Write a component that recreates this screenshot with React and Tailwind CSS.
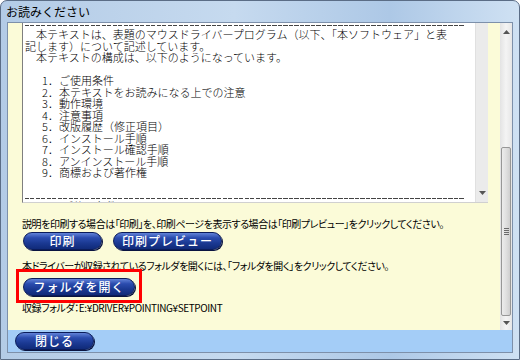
const FONT = "font-['Noto_Sans_CJK_JP',sans-serif]"

const INTRO = [
  '　本テキストは、表題のマウスドライバープログラム（以下、「本ソフトウェア」と表',
  '記します）について記述しています。',
  '　本テキストの構成は、以下のようになっています。',
  '',
]

const ITEMS = [
  '1．ご使用条件',
  '2．本テキストをお読みになる上での注意',
  '3．動作環境',
  '4．注意事項',
  '5．改版履歴（修正項目）',
  '6．インストール手順',
  '7．インストール確認手順',
  '8．アンインストール手順',
  '9．商標および著作権',
]

function Arrow({ up }) {
  return (
    <svg width="7" height="4" viewBox="0 0 7 4">
      <path d={up ? 'M0 4 L3.5 0 L7 4 Z' : 'M0 0 L3.5 4 L7 0 Z'} fill="#555" />
    </svg>
  )
}

function NavyButton({ children, className }) {
  return (
    <button className={`h-[18px] rounded-full border border-[#0b1c5a] bg-[linear-gradient(180deg,#6283d8_0%,#2b4cae_30%,#1a3891_65%,#102a79_100%)] text-white text-[12px] font-medium tracking-[1px] leading-none shadow-[1px_1px_0_#0a1440] ${className}`}>
      {children}
    </button>
  )
}

export default function App() {
  return (
    <div className={`w-[520px] h-[360px] flex flex-col rounded-t-[7px] border border-[#5b6d86] bg-[linear-gradient(90deg,#b3cbe6,#c6daef_45%,#adc8e6_75%,#cfe1f3)] overflow-hidden ${FONT}`}>
      <div className="h-[21px] flex items-center pl-[5px] text-[12px] text-black">お読みください</div>

      <div className="flex-1 flex px-[6px] pb-[6px]">
        <div className="flex-1 flex flex-col border border-[#7d90aa] bg-white">
          <div className="flex-1 flex">
            {/* cream page */}
            <div className="flex-1 flex flex-col bg-[#fbfbd8] pl-[14px] pr-[12px]">
              {/* text box */}
              <div className="h-[180px] flex border-l border-b border-l-[#7f7f7f] border-b-[#d0d0d0] bg-white">
                <div className="flex-1 overflow-hidden pl-[2px] pt-[2px] text-[11px] leading-[11.5px] font-light text-black">
                  <div className="w-[440px] h-px bg-[repeating-linear-gradient(90deg,#444_0_4px,transparent_4px_5.5px)]" />
                  <div className="mt-[3px]">
                    {INTRO.map((l, i) => (
                      <div key={i} className="h-[11.5px] whitespace-pre">{l}</div>
                    ))}
                    {ITEMS.map(l => (
                      <div key={l} className="h-[11.5px] pl-[17px] whitespace-pre">{l}</div>
                    ))}
                  </div>
                  <div className="mt-[19px] w-[440px] h-px bg-[repeating-linear-gradient(90deg,#444_0_4px,transparent_4px_5.5px)]" />
                  <div className="mt-[2px] pl-[37px]">ご使用条件</div>
                </div>
                {/* inner scrollbar */}
                <div className="w-[13px] flex flex-col bg-[#ebebeb] border-l border-[#e0e0e0]">
                  <div className="flex-1" />
                  <div className="h-[14px] flex items-center justify-center mb-[2px]"><Arrow /></div>
                </div>
              </div>

              <div className="mt-[15px] text-[10px] leading-[11px] tracking-[-0.45px] [font-feature-settings:'palt'] text-black">
                説明を印刷する場合は「印刷」を、印刷ページを表示する場合は「印刷プレビュー」をクリックしてください。
              </div>
              <div className="mt-[3px] flex gap-[11px] pl-[1px]">
                <NavyButton className="w-[79px]">印刷</NavyButton>
                <NavyButton className="w-[109px]">印刷プレビュー</NavyButton>
              </div>
              <div className="mt-[10px] text-[10px] leading-[11px] tracking-[-0.45px] [font-feature-settings:'palt'] text-black">
                本ドライバーが収録されているフォルダを開くには、「フォルダを開く」をクリックしてください。
              </div>
              <div className="mt-[2px] pl-[1px] flex">
                <div className="relative">
                  <NavyButton className="w-[112px]">フォルダを開く</NavyButton>
                  <div className="absolute -left-[7px] -right-[7px] -top-[4px] -bottom-[6px] border-[3px] border-[#f00]" />
                </div>
              </div>
              <div className="mt-[5px] text-[10px] leading-[11px] tracking-[-0.4px] [font-feature-settings:'palt'] text-black">
                収録フォルダ：E:¥DRIVER¥POINTING¥SETPOINT
              </div>
            </div>

            {/* outer scrollbar */}
            <div className="w-[12px] flex flex-col bg-[linear-gradient(90deg,#e3e3e3,#f4f4f4_50%,#e6e6e6)]">
              <div className="h-[17px] flex items-center justify-center"><Arrow up /></div>
              <div className="h-[107px]" />
              <div className="h-[169px] mx-[1px] rounded-[2px] border border-[#979797] bg-[linear-gradient(90deg,#ececec,#e0e0e0_50%,#cfcfcf)] flex items-center justify-center">
                <div className="flex flex-col gap-[1px]">
                  <div className="w-[5px] h-px bg-[#6a6a6a]" />
                  <div className="w-[5px] h-px bg-[#6a6a6a]" />
                  <div className="w-[5px] h-px bg-[#6a6a6a]" />
                  <div className="w-[5px] h-px bg-[#6a6a6a]" />
                </div>
              </div>
              <div className="flex-1 flex items-center justify-center"><Arrow /></div>
            </div>
          </div>

          {/* bottom blue bar */}
          <div className="h-[22px] flex items-center pl-[7px] bg-[#a4cdf7]">
            <NavyButton className="w-[79px]">閉じる</NavyButton>
          </div>
        </div>
      </div>
    </div>
  )
}
